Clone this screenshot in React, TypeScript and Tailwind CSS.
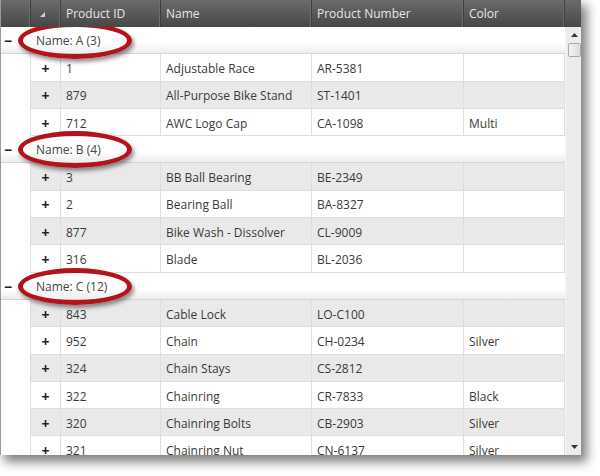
import React from 'react';

type Product = { id: string; name: string; number: string; color: string };
type Group = { key: string; count: number; items: Product[] };

const groups: Group[] = [
  {
    key: 'A',
    count: 3,
    items: [
      { id: '1', name: 'Adjustable Race', number: 'AR-5381', color: '' },
      { id: '879', name: 'All-Purpose Bike Stand', number: 'ST-1401', color: '' },
      { id: '712', name: 'AWC Logo Cap', number: 'CA-1098', color: 'Multi' },
    ],
  },
  {
    key: 'B',
    count: 4,
    items: [
      { id: '3', name: 'BB Ball Bearing', number: 'BE-2349', color: '' },
      { id: '2', name: 'Bearing Ball', number: 'BA-8327', color: '' },
      { id: '877', name: 'Bike Wash - Dissolver', number: 'CL-9009', color: '' },
      { id: '316', name: 'Blade', number: 'BL-2036', color: '' },
    ],
  },
  {
    key: 'C',
    count: 12,
    items: [
      { id: '843', name: 'Cable Lock', number: 'LO-C100', color: '' },
      { id: '952', name: 'Chain', number: 'CH-0234', color: 'Silver' },
      { id: '324', name: 'Chain Stays', number: 'CS-2812', color: '' },
      { id: '322', name: 'Chainring', number: 'CR-7833', color: 'Black' },
      { id: '320', name: 'Chainring Bolts', number: 'CB-2903', color: 'Silver' },
      { id: '321', name: 'Chainring Nut', number: 'CN-6137', color: 'Silver' },
    ],
  },
];

// header cell
function Head({ w, children }: { w: string; children?: React.ReactNode }) {
  return (
    <div className={`${w} h-full shrink-0 flex items-center pl-[5px] pt-[1px] border-r border-[#3c3c3c] shadow-[inset_-1px_0_0_#6e6e6e]`}>
      {children}
    </div>
  );
}

function Cell({ w, children }: { w: string; children?: React.ReactNode }) {
  return (
    <div className={`${w} h-full shrink-0 flex items-center pl-[5px] pt-[3px] border-r border-[#dedede] whitespace-nowrap overflow-hidden`}>
      {children}
    </div>
  );
}

export default function App() {
  let rowIndex = 0;

  return (
    <div className="w-[600px] h-[476px] bg-white" style={{ fontFamily: '"Open Sans", "Noto Sans", sans-serif' }}>
      <div className="w-[581px] h-[455px] flex flex-col overflow-hidden border-l border-[#9a9a9a] shadow-[5px_6px_10px_1px_rgba(0,0,0,0.5)] text-[12px] text-[#3a3a3a]">
        {/* header */}
        <div className="h-[27px] shrink-0 flex bg-gradient-to-b from-[#6b6b6b] to-[#474747] text-[#e6e6e6] text-[12px]">
          <Head w="w-[30px]" />
          <Head w="w-[30px]">
            <svg width="5" height="5" viewBox="0 0 5 5" className="ml-[4px]">
              <polygon points="0,5 5,5 5,0" fill="#d0d0d0" />
            </svg>
          </Head>
          <Head w="w-[100px]">Product ID</Head>
          <Head w="w-[151px]">Name</Head>
          <Head w="w-[152px]">Product Number</Head>
          <Head w="w-[101px]">Color</Head>
          <div className="flex-1" />
        </div>

        <div className="flex-1 flex min-h-0">
          {/* rows */}
          <div className="w-[564px] shrink-0 overflow-hidden">
            {groups.map((g) => (
              <div key={g.key}>
                <div className="relative h-[27.3px] flex items-center pt-[2px] bg-gradient-to-b from-white from-60% to-[#ededed] border-b border-[#d6d6d6]">
                  <div className="w-[30px] shrink-0 pl-[3px] text-[#222] font-bold text-[14px] leading-none">−</div>
                  <div className="pl-[5px] text-[#444]">
                    Name: {g.key} ({g.count})
                  </div>
                  <div className="absolute left-[17px] top-[-5px] w-[114px] h-[37px] rounded-[50%] border-[5px] border-[#b3131a] shadow-[2px_3px_4px_rgba(0,0,0,0.45)]" />
                </div>
                {g.items.map((p) => {
                  const odd = rowIndex++ % 2 === 1;
                  return (
                    <div key={p.id} className="h-[27.3px] flex">
                      <div className="w-[30px] shrink-0 h-full bg-white border-r border-[#dedede]" />
                      <div className={`flex-1 flex h-full border-b border-[#dedede] ${odd ? 'bg-[#e9e9e9]' : 'bg-white'}`}>
                        <div className="w-[30px] shrink-0 h-full flex items-center justify-center pt-[2px] border-r border-[#dedede] text-[#222] font-bold text-[14px]">+</div>
                        <Cell w="w-[100px]">{p.id}</Cell>
                        <Cell w="w-[151px]">{p.name}</Cell>
                        <Cell w="w-[152px]">{p.number}</Cell>
                        <Cell w="w-[101px]">{p.color}</Cell>
                      </div>
                    </div>
                  );
                })}
              </div>
            ))}
          </div>

          {/* scrollbar */}
          <div className="w-[17px] shrink-0 flex flex-col items-center bg-[#ececec] border-l border-[#f6f6f6]">
            <div className="h-[16px] flex items-center justify-center">
              <svg width="7" height="4" viewBox="0 0 7 4">
                <polygon points="0,4 7,4 3.5,0" fill="#333" />
              </svg>
            </div>
            <div className="w-[13px] h-[14px] rounded-[2px] border border-[#a8a8a8] bg-gradient-to-r from-[#f4f4f4] to-[#dcdcdc]" />
            <div className="flex-1" />
            <div className="h-[16px] flex items-center justify-center">
              <svg width="7" height="4" viewBox="0 0 7 4">
                <polygon points="0,0 7,0 3.5,4" fill="#333" />
              </svg>
            </div>
          </div>
        </div>
      </div>
    </div>
  );
}
